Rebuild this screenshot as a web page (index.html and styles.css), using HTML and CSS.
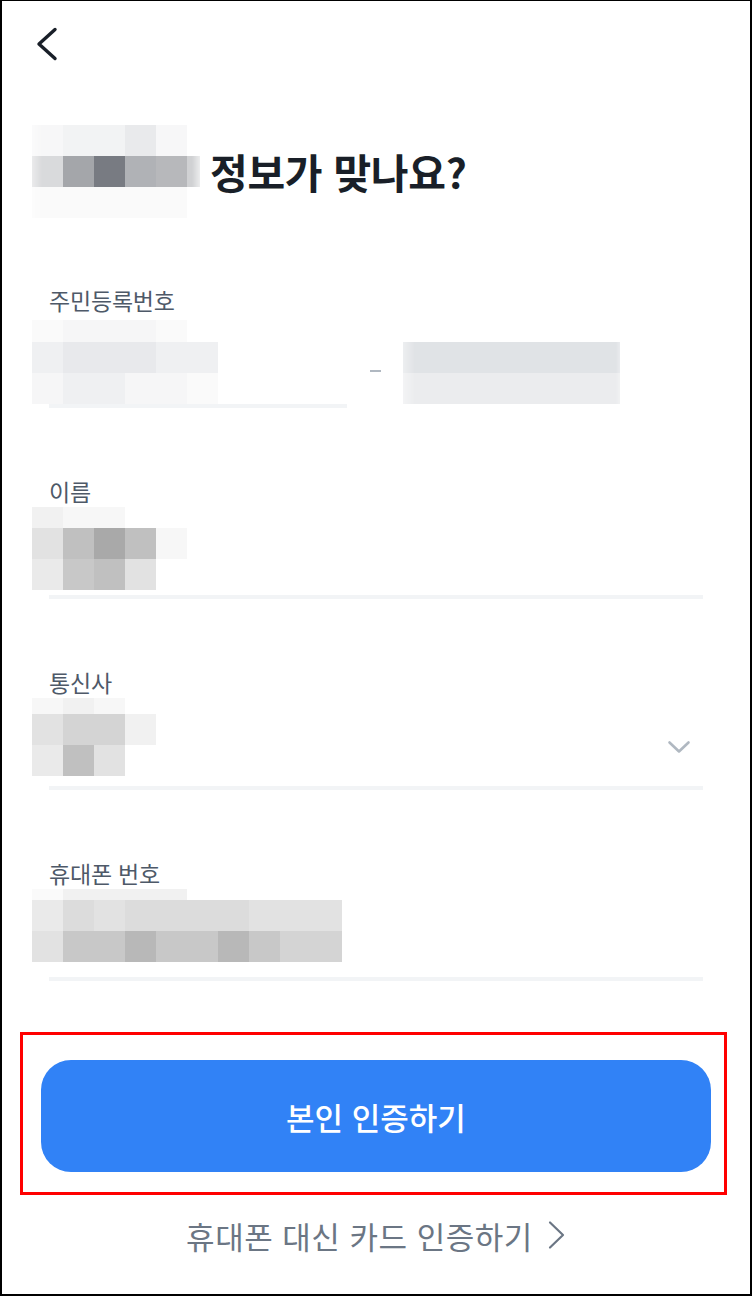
FILE: index.html
```html
<!DOCTYPE html>
<html lang="ko">
<head>
<meta charset="utf-8">
<title>정보가 맞나요?</title>
<link rel="stylesheet" href="styles.css">
</head>
<body>
<div class="screen">
  <header class="topbar">
    <button class="back" type="button" aria-label="뒤로">
      <svg width="28" height="40" viewBox="0 0 28 40"><path d="M22 5.5 L6 20 L22 34.5" fill="none" stroke="#191f28" stroke-width="3.4" stroke-linecap="round" stroke-linejoin="round"/></svg>
    </button>
  </header>

  <section class="title-row">
    <div class="pix pix-title">
      <i class="b0"></i><i class="b1"></i><i class="b1"></i><i class="b2"></i><i class="b0"></i><i class="w"></i>
      <i class="b3"></i><i class="b7"></i><i class="b8"></i><i class="b6"></i><i class="b5"></i><i class="b4"></i>
      <i class="w1"></i><i class="w1"></i><i class="w1"></i><i class="w1"></i><i class="w1"></i><i class="w"></i>
    </div>
    <h1 class="title">정보가 맞나요?</h1>
  </section>

  <div class="fields">
    <div class="field">
      <div class="label">주민등록번호</div>
      <div class="rrn">
        <div class="rrn-front">
          <div class="area">
            <div class="pix pix-rrn1">
              <i class="w1"></i><i class="s0"></i><i class="s0"></i><i class="s0"></i><i class="w1"></i><i class="w"></i>
              <i class="s1"></i><i class="s2"></i><i class="s2"></i><i class="s2"></i><i class="s1"></i><i class="s1"></i>
              <i class="s0"></i><i class="s1"></i><i class="s1"></i><i class="s0"></i><i class="s0"></i><i class="w1"></i>
            </div>
          </div>
          <div class="underline"></div>
        </div>
        <span class="dash"></span>
        <div class="pix pix-rrn2">
          <i class="r1"></i><i class="r1"></i><i class="r1"></i><i class="r1"></i><i class="r1"></i><i class="r1"></i><i class="r1"></i>
          <i class="r2"></i><i class="r2"></i><i class="r2"></i><i class="r2"></i><i class="r2"></i><i class="r2"></i><i class="r2"></i>
        </div>
      </div>
    </div>

    <div class="field">
      <div class="label">이름</div>
      <div class="area">
        <div class="pix pix-name">
          <i class="n1"></i><i class="n0"></i><i class="n0"></i><i class="w"></i><i class="w"></i>
          <i class="n3"></i><i class="n7"></i><i class="n9"></i><i class="n7"></i><i class="n0"></i>
          <i class="n2"></i><i class="n6"></i><i class="n7"></i><i class="n3"></i><i class="w"></i>
        </div>
      </div>
      <div class="underline"></div>
    </div>

    <div class="field">
      <div class="label">통신사</div>
      <div class="area area-select">
        <div class="pix pix-carrier">
          <i class="n0"></i><i class="n1"></i><i class="n0"></i><i class="w"></i>
          <i class="n3"></i><i class="n5"></i><i class="n5"></i><i class="n1"></i>
          <i class="n2"></i><i class="n7"></i><i class="n3"></i><i class="w"></i>
        </div>
        <svg class="caret" width="24" height="14" viewBox="0 0 24 14"><path d="M2.5 2.5 L12 11.5 L21.5 2.5" fill="none" stroke="#b0b8c1" stroke-width="2.6" stroke-linecap="round" stroke-linejoin="round"/></svg>
      </div>
      <div class="underline"></div>
    </div>

    <div class="field">
      <div class="label">휴대폰 번호</div>
      <div class="area">
        <div class="pix pix-phone">
          <i class="w1"></i><i class="n1"></i><i class="n1"></i><i class="n1"></i><i class="n1"></i><i class="w"></i><i class="w"></i><i class="w"></i><i class="w"></i><i class="w"></i>
          <i class="n2"></i><i class="n4"></i><i class="n3"></i><i class="n4"></i><i class="n4"></i><i class="n4"></i><i class="n4"></i><i class="n3"></i><i class="n3"></i><i class="n3"></i>
          <i class="n3"></i><i class="n6"></i><i class="n6"></i><i class="n8"></i><i class="n6"></i><i class="n6"></i><i class="n8"></i><i class="n6"></i><i class="n5"></i><i class="n5"></i>
        </div>
      </div>
      <div class="underline"></div>
    </div>
  </div>

  <div class="cta-box">
    <button class="cta" type="button">본인 인증하기</button>
  </div>

  <a class="alt-link" href="#">휴대폰 대신 카드 인증하기<svg width="20" height="30" viewBox="0 0 20 30"><path d="M4 2.5 L17 15 L4 27.5" fill="none" stroke="#6b7684" stroke-width="2.2" stroke-linecap="round" stroke-linejoin="round"/></svg></a>
</div>
</body>
</html>
```

FILE: styles.css
```css
* { box-sizing: border-box; }

html, body {
  margin: 0;
  padding: 0;
  background: #ffffff;
}

body {
  font-family: "Noto Sans CJK KR", "Noto Sans", sans-serif;
}

.screen {
  width: 752px;
  height: 1296px;
  border: 2px solid #000;
  border-top-width: 1px;
  background: #fff;
  display: flex;
  flex-direction: column;
  overflow: hidden;
}

/* top bar */
.topbar {
  padding: 23px 0 0 31px;
  height: 64px;
}
.back {
  display: block;
  padding: 0;
  border: 0;
  background: none;
  width: 28px;
  height: 40px;
}
.back svg { display: block; }

/* title */
.title-row {
  display: flex;
  align-items: center;
  margin: 60px 0 0 30px;
  height: 93px;
}
.title {
  margin: 0 0 0 10px;
  font-size: 41px;
  font-weight: 700;
  color: #191f28;
  line-height: 93px;
  letter-spacing: -0.3px;
}

/* pixelated blur blocks */
.pix {
  display: grid;
  flex: none;
}
.pix i { display: block; }

.pix-title {
  grid-template-columns: 31px 31px 31px 31px 31px 13px;
  grid-template-rows: 31px 31px 31px;
  -webkit-mask-image: linear-gradient(to right, rgba(0,0,0,.55), #000 10px, #000 calc(100% - 8px), rgba(0,0,0,.4));
  mask-image: linear-gradient(to right, rgba(0,0,0,.55), #000 10px, #000 calc(100% - 8px), rgba(0,0,0,.4));
}

.pix-rrn1 {
  margin: 4px 0 0 -17px;
  grid-template-columns: repeat(6, 31px);
  grid-template-rows: 22px 31px 31px;
}
.pix-rrn2 {
  margin: 26px 0 0 22px;
  grid-template-columns: repeat(7, 31px);
  grid-template-rows: 31px 31px;
  -webkit-mask-image: linear-gradient(to right, rgba(0,0,0,.6), #000 12px, #000 calc(100% - 4px), rgba(0,0,0,.7));
  mask-image: linear-gradient(to right, rgba(0,0,0,.6), #000 12px, #000 calc(100% - 4px), rgba(0,0,0,.7));
}
.pix-name {
  margin: 0 0 0 -17px;
  grid-template-columns: repeat(5, 31px);
  grid-template-rows: 21px 31px 31px;
}
.pix-carrier {
  margin: 0 0 0 -17px;
  grid-template-columns: repeat(4, 31px);
  grid-template-rows: 16px 31px 31px;
}
.pix-phone {
  margin: 0 0 0 -17px;
  grid-template-columns: repeat(10, 31px);
  grid-template-rows: 11px 31px 31px;
}

/* shades */
.w  { background: #ffffff; }
.w1 { background: #fafafa; }
.b0 { background: #f7f7f8; }
.b1 { background: #f2f3f4; }
.b2 { background: #e9eaec; }
.b3 { background: #d9dadc; }
.b4 { background: #d0d1d3; }
.b5 { background: #b7b8bb; }
.b6 { background: #b0b2b6; }
.b7 { background: #a4a6aa; }
.b8 { background: #787b82; }

.s0 { background: #f6f6f7; }
.s1 { background: #eff0f2; }
.s2 { background: #e8e9ec; }
.r1 { background: #e0e3e6; }
.r2 { background: #ebecee; }

.n0 { background: #f7f7f7; }
.n1 { background: #f1f1f1; }
.n2 { background: #eaeaea; }
.n3 { background: #e2e2e2; }
.n4 { background: #dcdcdc; }
.n5 { background: #d4d4d4; }
.n6 { background: #c8c8c8; }
.n7 { background: #c0c0c0; }
.n8 { background: #b8b8b8; }
.n9 { background: #a9a9a9; }

/* form fields */
.fields {
  margin-top: 66px;
  padding: 0 47px;
  display: flex;
  flex-direction: column;
  gap: 67px;
}
.label {
  font-size: 23px;
  line-height: 32px;
  color: #4e5968;
  letter-spacing: -0.2px;
}
.area {
  height: 88px;
  display: flex;
  align-items: flex-start;
}
.area-select {
  justify-content: space-between;
}
.caret {
  display: block;
  margin: 42px 12px 0 0;
}
.underline {
  height: 4px;
  background: #f2f4f6;
}

.rrn {
  display: flex;
  align-items: flex-start;
}
.rrn-front {
  width: 298px;
  flex: none;
}
.dash {
  display: block;
  width: 11px;
  height: 2px;
  background: #b0b8c1;
  margin: 54px 0 0 23px;
}

/* CTA */
.cta-box {
  margin: 51px 0 0 18px;
  width: 707px;
  border: 3px solid #ff0000;
  padding: 25px 13px 20px 18px;
}
.cta {
  display: block;
  width: 100%;
  height: 112px;
  border: 0;
  border-radius: 30px;
  background: #3182f6;
  color: #ffffff;
  font-family: "Noto Sans CJK KR", "Noto Sans", sans-serif;
  font-size: 31px;
  font-weight: 500;
  letter-spacing: 0;
  padding: 0;
}

.alt-link {
  margin-top: 20px;
  display: flex;
  justify-content: center;
  align-items: center;
  gap: 13px;
  height: 40px;
  font-size: 31px;
  color: #6b7684;
  text-decoration: none;
  letter-spacing: 0.5px;
}
.alt-link svg { display: block; }
```
